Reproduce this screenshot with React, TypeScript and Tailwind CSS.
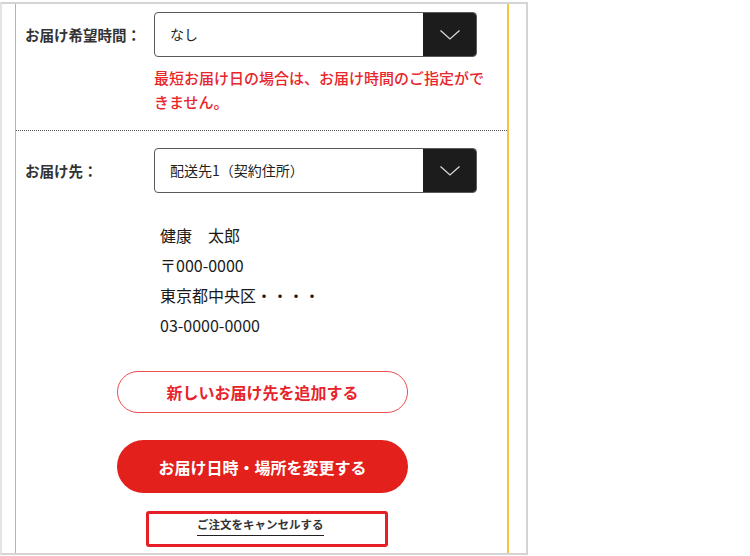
const font = { fontFamily: '"Noto Sans CJK JP", "Noto Sans", sans-serif' };

function SelectBox({ value }: { value: string }) {
  return (
    <div className="flex h-[45px] w-[323px] overflow-hidden rounded-[4px] border border-[#5a5a5a]">
      <div className="flex flex-1 items-center pl-[15px] text-[14px] text-[#222]">{value}</div>
      <div className="flex w-[53px] items-center justify-center bg-[#1c1c1c]">
        <svg width="22" height="12" viewBox="0 0 22 12" fill="none">
          <path d="M1.5 1.5 L11 10 L20.5 1.5" stroke="#d8d8d8" strokeWidth="1.3" />
        </svg>
      </div>
    </div>
  );
}

export default function App() {
  return (
    <div className="h-[556px] w-[750px] bg-white pt-[2px]" style={font}>
      <div className="flex h-[553px] w-[528px] border-2 border-[#d4d4d4] border-l-[#e4e4e4] pl-[13px]">
        <div className="flex w-[494px] flex-col border-l border-r-2 border-[#f2ae1c] border-r-[#f8c440]">
          {/* delivery time */}
          <div className="border-b border-dotted border-[#555] pb-[16px] pt-[8px]">
            <div className="flex items-center">
              <div className="w-[138px] pl-[9px] text-[14.5px] font-bold text-[#333]">お届け希望時間：</div>
              <SelectBox value="なし" />
            </div>
            <p className="ml-[138px] mt-[9px] w-[335px] text-[15px] font-medium leading-[24px] text-[#e8262c]">
              最短お届け日の場合は、お届け時間のご指定ができません。
            </p>
          </div>

          {/* destination */}
          <div className="pt-[17px]">
            <div className="flex items-center">
              <div className="w-[138px] pl-[9px] text-[14.5px] font-bold text-[#333]">お届け先：</div>
              <SelectBox value="配送先1（契約住所）" />
            </div>
            <div className="ml-[144px] mt-[27px] text-[16px] leading-[30px] text-[#1a1a1a]">
              <p>健康　太郎</p>
              <p>〒000-0000</p>
              <p>東京都中央区・・・・</p>
              <p>03-0000-0000</p>
            </div>
          </div>

          <button className="ml-[101px] mt-[31px] flex h-[42px] w-[291px] items-center justify-center rounded-full border border-[#ec4f4f] text-[16px] font-bold text-[#e8232b]">
            新しいお届け先を追加する
          </button>
          <button className="ml-[101px] mt-[27px] flex h-[53px] w-[291px] items-center justify-center rounded-full bg-[#e3201c] text-[16px] font-bold text-white">
            お届け日時・場所を変更する
          </button>
          <div className="ml-[130px] mt-[18px] flex h-[36px] w-[242px] items-start rounded-[3px] border-[3px] border-[#e61e25] pl-[48px] pt-[1px]">
            <span className="border-b border-[#222] pb-[2px] text-[11.5px] font-bold leading-[18px] text-[#333]">ご注文をキャンセルする</span>
          </div>
        </div>
      </div>
    </div>
  );
}
